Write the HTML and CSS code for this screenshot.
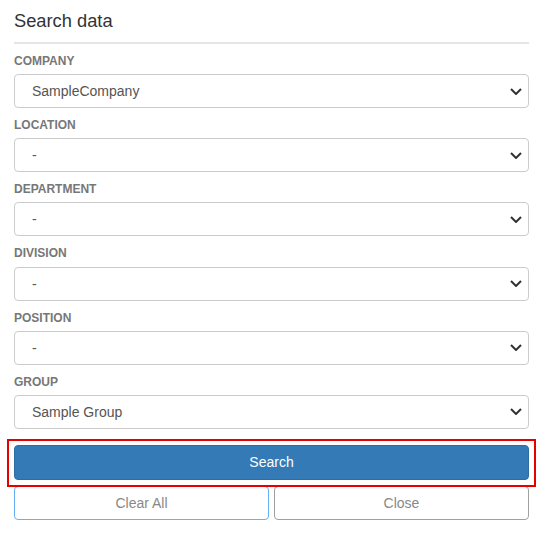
FILE: index.html
```html
<!DOCTYPE html>
<html lang="en">
<head>
<meta charset="utf-8">
<title>Search data</title>
<link rel="stylesheet" href="styles.css">
</head>
<body>
<div class="panel">
  <h4 class="title">Search data</h4>
  <div class="fields">
    <div class="field">
      <label class="label">COMPANY</label>
      <div class="select"><span>SampleCompany</span><svg class="chev" viewBox="0 0 12 7" width="12" height="7"><path d="M1 1l5 5 5-5" fill="none" stroke="#333" stroke-width="2"/></svg></div>
    </div>
    <div class="field">
      <label class="label">LOCATION</label>
      <div class="select"><span>-</span><svg class="chev" viewBox="0 0 12 7" width="12" height="7"><path d="M1 1l5 5 5-5" fill="none" stroke="#333" stroke-width="2"/></svg></div>
    </div>
    <div class="field">
      <label class="label">DEPARTMENT</label>
      <div class="select"><span>-</span><svg class="chev" viewBox="0 0 12 7" width="12" height="7"><path d="M1 1l5 5 5-5" fill="none" stroke="#333" stroke-width="2"/></svg></div>
    </div>
    <div class="field">
      <label class="label">DIVISION</label>
      <div class="select"><span>-</span><svg class="chev" viewBox="0 0 12 7" width="12" height="7"><path d="M1 1l5 5 5-5" fill="none" stroke="#333" stroke-width="2"/></svg></div>
    </div>
    <div class="field">
      <label class="label">POSITION</label>
      <div class="select"><span>-</span><svg class="chev" viewBox="0 0 12 7" width="12" height="7"><path d="M1 1l5 5 5-5" fill="none" stroke="#333" stroke-width="2"/></svg></div>
    </div>
    <div class="field">
      <label class="label">GROUP</label>
      <div class="select"><span>Sample Group</span><svg class="chev" viewBox="0 0 12 7" width="12" height="7"><path d="M1 1l5 5 5-5" fill="none" stroke="#333" stroke-width="2"/></svg></div>
    </div>
  </div>
  <div class="actions">
    <div class="search-wrap">
      <button class="btn btn-primary">Search</button>
      <div class="highlight"></div>
    </div>
    <div class="row">
      <button class="btn btn-clear">Clear All</button>
      <button class="btn btn-close">Close</button>
    </div>
  </div>
</div>
</body>
</html>
```

FILE: styles.css
```css
* { box-sizing: border-box; }
html, body { margin: 0; padding: 0; background: #fff; }
body {
  font-family: "Liberation Sans", Arial, sans-serif;
  color: #333;
}
.panel {
  padding: 9px 14px 0 14px;
}
.title {
  margin: 0;
  font-size: 18.3px;
  font-weight: normal;
  line-height: 24px;
  color: #333;
  padding-bottom: 9px;
  border-bottom: 2px solid #e5e5e5;
}
.fields {
  padding-top: 9px;
  display: flex;
  flex-direction: column;
  gap: 9px;
}
.field {
  display: flex;
  flex-direction: column;
  gap: 4px;
}
.label {
  font-size: 12px;
  font-weight: bold;
  line-height: 1.42857;
  color: #777;
}
.select {
  height: 34px;
  border: 1px solid #ccc;
  border-radius: 4px;
  display: flex;
  align-items: center;
  justify-content: space-between;
  padding: 0 6px 0 17px;
  font-size: 14px;
  color: #555;
}
.chev { display: block; }
.actions {
  padding-top: 16px;
  display: flex;
  flex-direction: column;
  gap: 6px;
}
.search-wrap { position: relative; }
.btn {
  font-family: "Liberation Sans", Arial, sans-serif;
  font-size: 14px;
  border-radius: 4px;
  background: #fff;
  display: block;
  width: 100%;
  padding: 0;
}
.btn-primary {
  height: 35px;
  background: #337ab7;
  border: 1px solid #2e6da4;
  color: #fff;
}
.highlight {
  position: absolute;
  top: -6px;
  left: -7px;
  right: -7px;
  bottom: -7px;
  border: 2px solid #e60000;
  pointer-events: none;
}
.row {
  display: flex;
  gap: 5px;
}
.btn-clear, .btn-close {
  height: 34px;
  flex: 1;
  color: #888;
}
.btn-clear { border: 1px solid #66b0f5; }
.btn-close { border: 1px solid #a0a0a0; }
```
